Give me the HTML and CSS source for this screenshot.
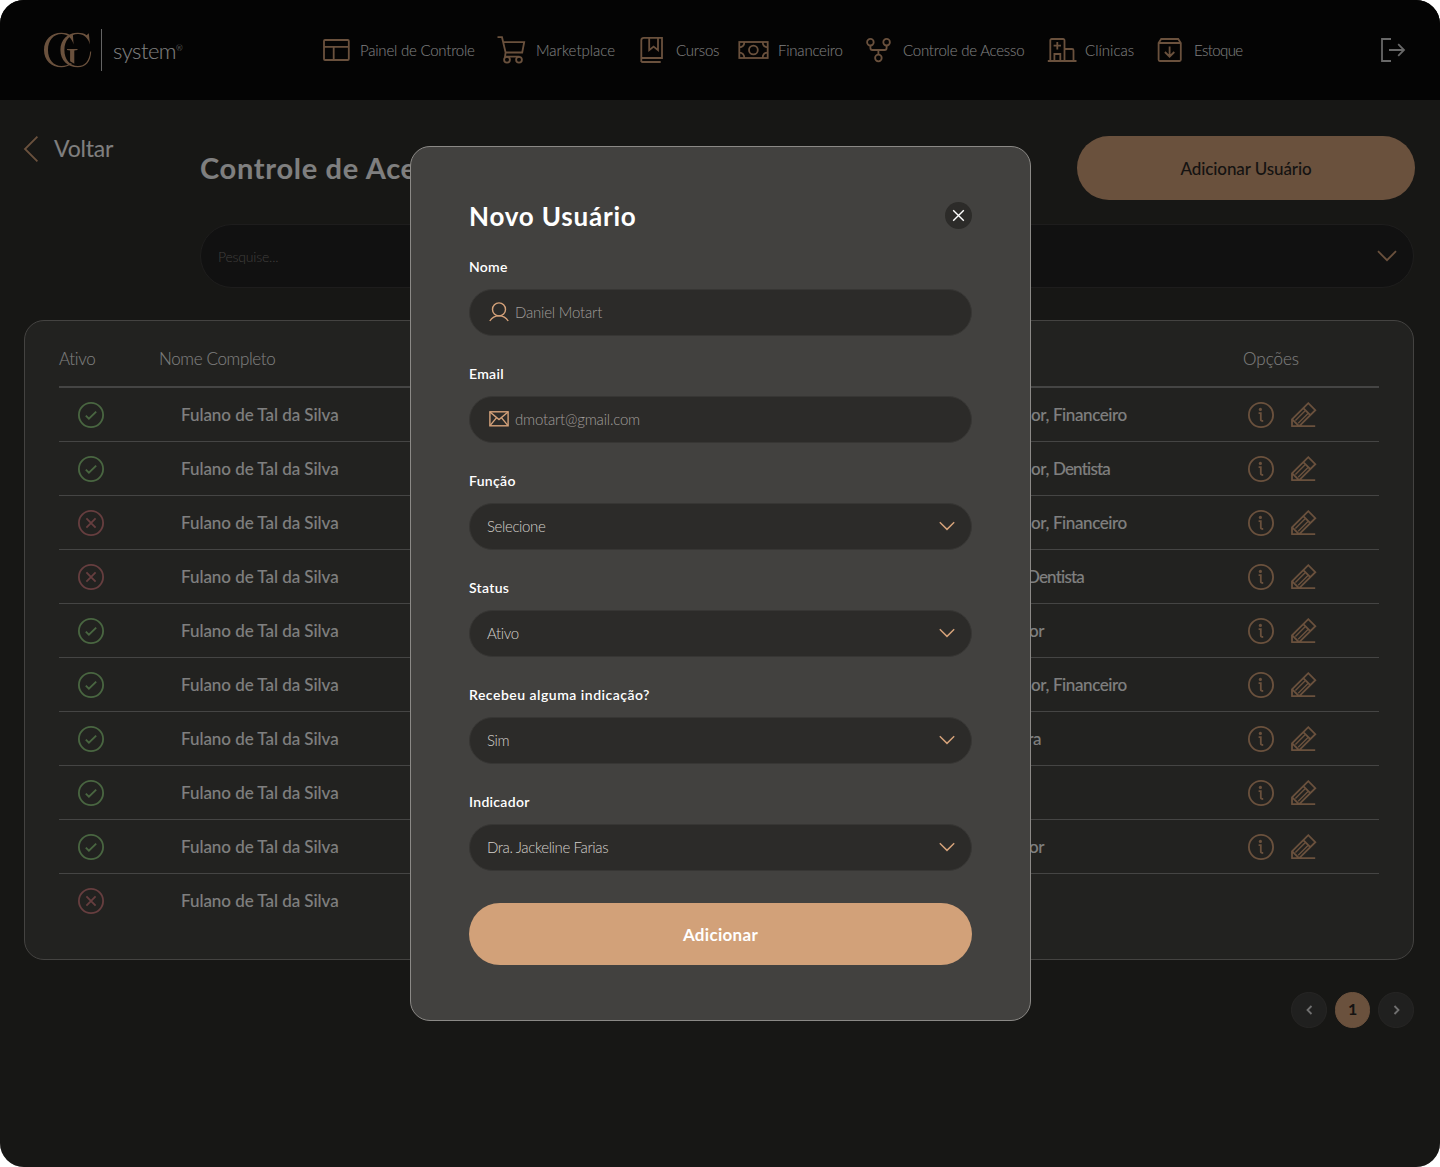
FILE: index.html
```html
<!DOCTYPE html>
<html lang="pt-BR">
<head>
<meta charset="utf-8">
<title>Controle de Acesso</title>
<link rel="stylesheet" href="styles.css">
</head>
<body>
<svg class="sprite" aria-hidden="true">
  <symbol id="check" viewBox="0 0 26 26"><circle cx="13" cy="13" r="12.1"/><path d="M7.8 13.6l3.1 3.1 7.3-7"/></symbol>
  <symbol id="cross" viewBox="0 0 26 26"><circle cx="13" cy="13" r="12.1"/><path d="M8.4 8.4l9.2 9.2M17.6 8.4l-9.2 9.2"/></symbol>
  <symbol id="info" viewBox="0 0 26 26"><circle cx="13" cy="13" r="12.1"/><circle class="dot" cx="12.4" cy="7.4" r="1.6"/><path d="M10.6 11.2h2.2v6.6q0 1.2 2.4 1.2"/></symbol>
  <symbol id="pencil" viewBox="0 0 26 26"><path d="M1 24.2V17.4L17.3 1.2l7 7L8.2 24.2M.2 24.2h24M1.2 17.4l6.8 6.8M12.3 6.2l7 7"/><path class="fine" d="M14.1 8.7L4.4 18.4M17 11.4L7.2 21.2"/></symbol>
  <symbol id="chevron" viewBox="0 0 20 12"><path d="M1 1.2l9 9 9-9"/></symbol>
</svg>
<div class="app">
  <header class="topbar">
    <div class="logo">
      <svg class="monogram" width="50" height="42" viewBox="0 0 50 42">
        <path d="M30.6 15.5C28.6 8.6 24.4 5 18.6 5C10.4 5 5 11.6 5 21s5.4 16 13.6 16c3.6 0 6.600-1 9.400-3l.6.8C25.600 37.200 22.400 38.200 18.400 38.200C8.200 38.200 1 31.200 1 21S8.200 3.800 18.400 3.800c3.600 0 6.400.8 8.800 2.400l2.600-1.800z"/>
        <path d="M24 20h10.500v.9l-3.200.7v13.200l-4.200-2.600V21.600l-3.100-.7z"/>
        <path d="M47 15.500C45 8.600 40.800 5 35 5C26.800 5 21.400 11.600 21.400 21s5.400 16 13.600 16c6.600 0 11.400-5 12.200-14.600h1C47.800 32.400 42.800 38.200 34.800 38.200C24.600 38.200 17.400 31.200 17.400 21S24.600 3.800 34.800 3.800c3.600 0 6.400.8 8.800 2.400l2.200-2z"/>
      </svg>
      <span class="logo-name">system<sup>®</sup></span>
    </div>
    <nav class="nav">
      <a><svg width="28" height="28"><rect x="2" y="4" width="24.8" height="20" rx="1"/><path d="M2 10.8h24.8M11.7 10.8V24"/></svg><span>Painel de Controle</span></a>
      <a class="wide"><svg width="30" height="28"><path d="M1.5 1.2H6l3.6 15.3h16.600L28.2 6.2H7.2M9.6 16.5L9 20.6h14.5"/><circle cx="11" cy="23.7" r="2.9"/><circle cx="23" cy="23.7" r="2.9"/></svg><span>Marketplace</span></a>
      <a><svg width="26" height="28"><path d="M1.300 26V4.200a2.400 2.400 0 0 1 2.400-2.400H22V22H1.300M1.300 26h19.400M9.200 2v12.200l4.400-3.600 4.400 3.600V2"/></svg><span>Cursos</span></a>
      <a><svg width="30" height="28"><rect x="1.3" y="6" width="28.4" height="16"/><circle cx="15.4" cy="14" r="4.4"/><path d="M1.3 11.3q5 0 5-5.3M24.7 6q0 5.3 5 5.3M1.3 16.7q5 0 5 5.3M24.7 22q0-5.3 5-5.3"/></svg><span>Financeiro</span></a>
      <a><svg width="27" height="28"><circle cx="4.4" cy="6.2" r="3.3"/><circle cx="20.6" cy="6.2" r="3.3"/><circle cx="12.4" cy="22" r="3.3"/><path d="M4.4 9.5V12a2 2 0 0 0 2 2h12.2a2 2 0 0 0 2-2V9.5M12.4 14v4.7"/></svg><span>Controle de Acesso</span></a>
      <a class="wide"><svg width="28" height="28"><path d="M.8 25h28.7M3.3 25V4.4a1.4 1.4 0 0 1 1.4-1.4h11.4a1.4 1.4 0 0 1 1.4 1.4V25M17.5 13h7.6a1.4 1.4 0 0 1 1.4 1.4V25M7.4 25v-7h5.9v7M10.3 6v7.4M6.6 9.7H14"/></svg><span>Clínicas</span></a>
      <a class="tight"><svg width="27" height="28"><path d="M1.6 7l2.600-4h17l2.600 4v16.800a1.200 1.200 0 0 1-1.200 1.200H2.800a1.200 1.200 0 0 1-1.200-1.200zM1.6 7h22.2M12.6 10.4v10M7.9 16l4.7 4.7 4.7-4.7"/></svg><span>Estoque</span></a>
    </nav>
    <svg class="logout" width="26" height="28"><path d="M11 3H2v22h9M9 14h15.4M18.2 8.2l5.8 5.8-5.8 5.8"/></svg>
  </header>

  <main class="page">
    <a class="back"><svg width="15" height="26"><path d="M13.4.6L1 13l12.400 12.400"/></svg><span>Voltar</span></a>
    <h1 class="page-title">Controle de Acesso</h1>
    <button class="add-user">Adicionar Usuário</button>
    <div class="search"><span>Pesquise...</span><svg width="20" height="12"><use href="#chevron"/></svg></div>

    <section class="card">
      <div class="thead"><span>Ativo</span><span>Nome Completo</span><span></span><span class="options">Opções</span></div>
      <div class="row"><svg class="status on"><use href="#check"/></svg><span>Fulano de Tal da Silva</span><span class="role"><i>Administrador,</i> Financeiro</span><span class="actions"><svg><use href="#info"/></svg><svg><use href="#pencil"/></svg></span></div>
      <div class="row"><svg class="status on"><use href="#check"/></svg><span>Fulano de Tal da Silva</span><span class="role"><i>Administrador,</i> <b>Dentista</b></span><span class="actions"><svg><use href="#info"/></svg><svg><use href="#pencil"/></svg></span></div>
      <div class="row"><svg class="status off"><use href="#cross"/></svg><span>Fulano de Tal da Silva</span><span class="role"><i>Administrador,</i> Financeiro</span><span class="actions"><svg><use href="#info"/></svg><svg><use href="#pencil"/></svg></span></div>
      <div class="row"><svg class="status off"><use href="#cross"/></svg><span>Fulano de Tal da Silva</span><span class="role"><i class="short">Protético,</i> <b>Dentista</b></span><span class="actions"><svg><use href="#info"/></svg><svg><use href="#pencil"/></svg></span></div>
      <div class="row"><svg class="status on"><use href="#check"/></svg><span>Fulano de Tal da Silva</span><span class="role"><i class="single">Administrador</i></span><span class="actions"><svg><use href="#info"/></svg><svg><use href="#pencil"/></svg></span></div>
      <div class="row"><svg class="status on"><use href="#check"/></svg><span>Fulano de Tal da Silva</span><span class="role"><i>Administrador,</i> Financeiro</span><span class="actions"><svg><use href="#info"/></svg><svg><use href="#pencil"/></svg></span></div>
      <div class="row"><svg class="status on"><use href="#check"/></svg><span>Fulano de Tal da Silva</span><span class="role"><i class="medium">Operadora</i></span><span class="actions"><svg><use href="#info"/></svg><svg><use href="#pencil"/></svg></span></div>
      <div class="row"><svg class="status on"><use href="#check"/></svg><span>Fulano de Tal da Silva</span><span class="role">Dentista</span><span class="actions"><svg><use href="#info"/></svg><svg><use href="#pencil"/></svg></span></div>
      <div class="row"><svg class="status on"><use href="#check"/></svg><span>Fulano de Tal da Silva</span><span class="role"><i class="single">Administrador</i></span><span class="actions"><svg><use href="#info"/></svg><svg><use href="#pencil"/></svg></span></div>
      <div class="row"><svg class="status off"><use href="#cross"/></svg><span>Fulano de Tal da Silva</span></div>
    </section>

    <div class="pager">
      <button><svg width="8" height="10"><path d="M6.500 1l-4 4 4 4"/></svg></button>
      <button class="current">1</button>
      <button><svg width="8" height="10"><path d="M2.500 1l4 4-4 4"/></svg></button>
    </div>
  </main>

  <div class="overlay">
    <div class="modal">
      <div class="modal-head">
        <h2>Novo Usuário</h2>
        <button class="close"><svg width="13" height="13"><path d="M1.2 1.2l10.6 10.6M11.8 1.2L1.2 11.8"/></svg></button>
      </div>
      <div class="form">
        <div class="group"><label>Nome</label><div class="field with-icon"><svg width="20" height="20"><circle cx="10" cy="7.4" r="6.5"/><path d="M.8 19C3 15.5 6 13.9 10 13.9s7 1.6 9.2 5.1"/></svg><span>Daniel Motart</span></div></div>
        <div class="group"><label>Email</label><div class="field with-icon"><svg width="20" height="20"><rect x=".9" y="2.8" width="18.2" height="14"/><path d="M1 3l9 7.6L19 3M1 16.6l6.6-8M19 16.6l-6.6-8"/></svg><span>dmotart@gmail.com</span></div></div>
        <div class="group"><label>Função</label><div class="field select"><span>Selecione</span><svg width="16" height="10"><use href="#chevron"/></svg></div></div>
        <div class="group"><label>Status</label><div class="field select"><span>Ativo</span><svg width="16" height="10"><use href="#chevron"/></svg></div></div>
        <div class="group"><label class="long">Recebeu alguma indicação?</label><div class="field select"><span>Sim</span><svg width="16" height="10"><use href="#chevron"/></svg></div></div>
        <div class="group"><label>Indicador</label><div class="field select"><span>Dra. Jackeline Farias</span><svg width="16" height="10"><use href="#chevron"/></svg></div></div>
      </div>
      <button class="submit">Adicionar</button>
    </div>
  </div>
</div>
</body>
</html>
```
FILE: styles.css
```css
* { box-sizing: border-box; }
body { margin: 0; background: #fff; font-family: Lato, "Noto Sans", sans-serif; color: #fff; }
h1, h2 { margin: 0; }
button { font-family: inherit; border: 0; padding: 0; color: inherit; display: flex; align-items: center; justify-content: center; }
svg { display: block; flex: none; fill: none; stroke: #d5a27a; stroke-width: 1.8; overflow: visible; }
.sprite { position: absolute; width: 0; height: 0; }

.app { position: relative; width: 1440px; height: 1167px; border-radius: 24px; overflow: hidden; background: #2f2e2a; }

.topbar { display: flex; align-items: center; height: 100px; padding: 0 34px 0 43px; background: #080808; }
.logo { display: flex; align-items: center; width: 279px; height: 42px; }
.monogram { margin-right: 8px; fill: #d5a27a; stroke: none; }
.logo-name { border-left: 1px solid #c8c8c8; height: 42px; padding-left: 11px; font-size: 22px; font-weight: 300; line-height: 43px; letter-spacing: -.5px; }
.logo-name sup { font-size: 8px; line-height: 0; vertical-align: 8px; }
.nav { display: grid; grid-template-columns: 174px 144px 98px 128px 181px 110px 110px; }
.nav a { display: flex; align-items: center; gap: 10px; font-size: 15px; font-weight: 300; line-height: 28px; letter-spacing: -.22px; white-space: nowrap; }
.nav .wide { letter-spacing: 0; }
.nav .tight { letter-spacing: -.6px; }
.logout { margin-left: auto; stroke: #d0d0d0; }

.page { display: grid; grid-template-columns: 176px 1fr 338px; padding: 36px 25px 0 24px; }
.back { display: flex; gap: 15px; height: 64px; font-size: 23px; line-height: 25px; letter-spacing: -.2px; }
.page-title { font-size: 29px; font-weight: 700; line-height: 63px; letter-spacing: .7px; }
.add-user { height: 64px; border-radius: 32px; background: #d5a27a; color: #2a2724; font-size: 17px; font-weight: 500; letter-spacing: -.1px; }
.search { grid-column: 2 / 4; display: flex; align-items: center; justify-content: space-between; height: 64px; margin: 24px 1px 0 0; padding: 0 16px 0 17px; border: 1px solid #3c3b3a; border-radius: 32px; background: #222; color: #807d7a; font-size: 14px; font-weight: 300; letter-spacing: -.2px; }

.card { grid-column: 1 / 4; height: 640px; margin: 32px 1px 0 0; padding: 0 34px; border: 1px solid #888682; border-radius: 20px; background: #444440; }
.thead, .row { display: grid; grid-template-columns: 100px 781px 303px 1fr; align-items: center; }
.thead { height: 67px; padding-top: 9px; border-bottom: 2px solid #8a8a88; font-size: 17px; font-weight: 300; letter-spacing: -.35px; }
.options { letter-spacing: 0; }
.row { grid-template-columns: 122px 759px 308px 1fr; height: 54px; border-bottom: 1px solid #8a8a88; font-size: 17px; font-weight: 500; }
.row > span { letter-spacing: -.05px; }
.row:last-child { border: 0; padding-bottom: 1px; }
.row svg { width: 26px; height: 26px; }
.status { margin-left: 19px; }
.status.on { stroke: #93cd82; }
.status.off { stroke: #cd7c7e; }
.dot { fill: #d5a27a; stroke: none; }
.fine { stroke-width: 1.4; }
.row > .role { white-space: nowrap; letter-spacing: -.4px; }
.role b { font-weight: 500; letter-spacing: -.8px; }
.role i { display: inline-block; width: 109px; text-align: right; font-style: normal; }
.role .single { width: 104px; }
.role .medium { width: 101px; }
.role .short { width: 83px; }
.actions { display: flex; gap: 17px; }

.pager { grid-column: 1 / 4; display: flex; justify-content: flex-end; gap: 8px; margin: 32px 1px 0 0; }
.pager button { width: 35.6px; height: 35.6px; border: 1px solid #4c4b49; border-radius: 50%; background: #41403e; }
.pager svg { stroke: #e0e0e0; }
.pager .current { padding-bottom: 2px; border-color: #d5a27a; background: #d5a27a; color: #2a2724; font-size: 16px; font-weight: 700; }

.overlay { position: absolute; inset: 0; padding: 146px 0 0 410px; background: rgba(0, 0, 0, .5); }
.modal { width: 621px; height: 875px; padding: 55px 58px; border: 1px solid #8b8986; border-radius: 20px; background: #42413f; }
.modal-head { display: flex; align-items: center; justify-content: space-between; height: 27px; margin-bottom: 28px; }
.modal h2 { font-size: 26px; font-weight: 700; letter-spacing: .8px; }
.close { width: 27px; height: 27px; border-radius: 50%; background: #2c2b29; }
.close svg { stroke: #fff; stroke-width: 1.4; }
.form { display: grid; gap: 28px; }
.group { display: grid; gap: 12px; }
.group label { font-size: 14px; font-weight: 600; line-height: 20px; letter-spacing: .3px; }
.group .long { letter-spacing: .5px; }
.field { display: flex; align-items: center; height: 47px; padding-bottom: 2px; border: 1px solid #373634; border-radius: 24px; background: #2c2b29; font-size: 15px; font-weight: 300; }
.field svg { stroke-width: 1.4; }
.with-icon { gap: 6px; padding-left: 19px; color: #a09d9a; letter-spacing: -.2px; }
.select { justify-content: space-between; padding-left: 17px; padding-right: 16px; color: #d4d0cb; letter-spacing: -.38px; }
.field.select svg { stroke-width: 1.8; }
.submit { width: 503px; height: 62px; margin-top: 32px; border-radius: 31px; background: #d2a179; font-size: 17px; font-weight: 700; letter-spacing: .3px; }
```
